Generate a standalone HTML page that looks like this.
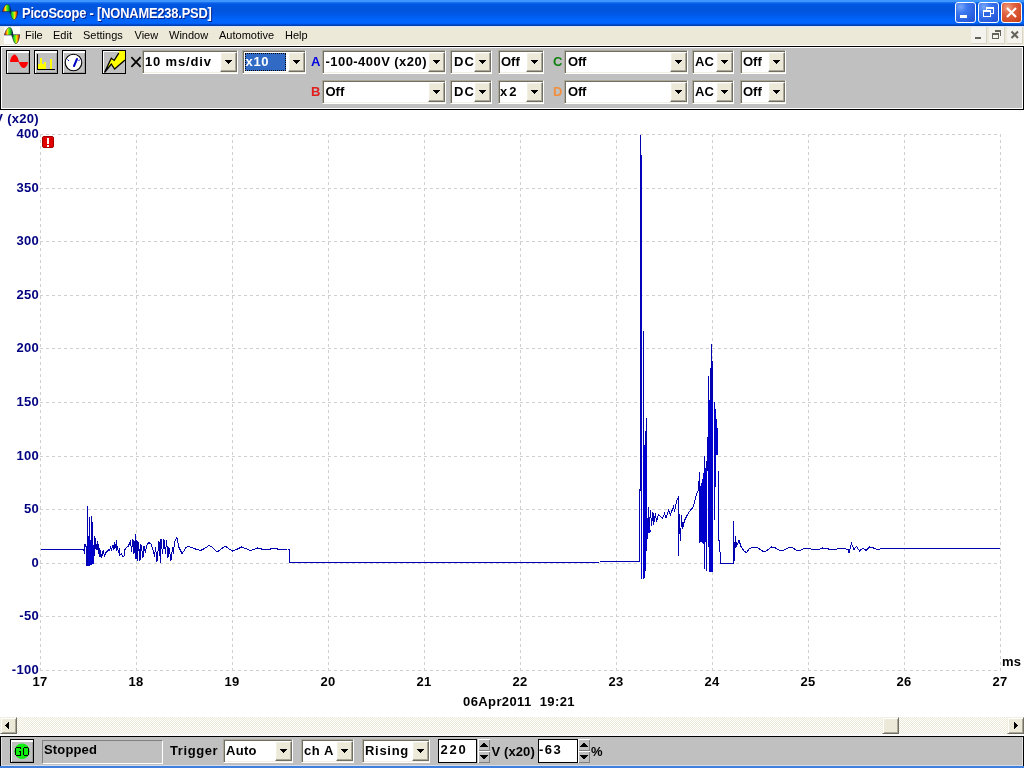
<!DOCTYPE html><html><head><meta charset="utf-8"><title>PicoScope</title><style>
*{margin:0;padding:0;box-sizing:border-box}
html,body{will-change:transform;width:1024px;height:768px;overflow:hidden;background:#fff;font-family:"Liberation Sans",sans-serif}
.a{position:absolute}
.t{position:absolute;white-space:nowrap;line-height:1}
.b13{font-size:13px;font-weight:bold;letter-spacing:0.3px}
.cb{position:absolute;border:1px solid;border-color:#ACA899 #FFFFFF #FFFFFF #ACA899;background:#fff;box-shadow:inset 1px 1px 0 #716F64,inset -1px -1px 0 #F1EFE2}
.cbb{position:absolute;top:1px;right:0px;bottom:1px;width:17px;background:#ECE9D8;border:1px solid;border-color:#FFFFFF #716F64 #716F64 #FFFFFF;box-shadow:inset -1px -1px 0 #ACA899,inset 1px 1px 0 #F1EFE2}
.arr{position:absolute;left:4px;top:7px;width:7px;height:4px;background:#000;clip-path:polygon(0 0,7px 0,7px 1px,6px 1px,6px 2px,5px 2px,5px 3px,4px 3px,4px 4px,3px 4px,3px 3px,2px 3px,2px 2px,1px 2px,1px 1px,0 1px)}
.tbtn{position:absolute;width:24px;height:24px;border:1px solid #000;background:#C0C0C0;box-shadow:inset 1px 1px 0 #fff,inset 0 2px 0 #fff,inset -1px -1px 0 #A0A0A0}
</style></head><body>
<div class="a" style="left:0;top:0;width:1024px;height:26px;background:linear-gradient(to bottom,#3D95FF 0px,#3D95FF 1.5px,#1A70F0 2.5px,#0058E2 4px,#0054DC 8px,#0055E0 12px,#005CEE 16px,#0064FA 19px,#0066FF 23px,#0058E8 24px,#0040B0 25px,#0040B0 26px)"></div>
<div class="a" style="left:0;top:26px;width:1024px;height:1px;background:#DCE6F8"></div>
<svg class="a" style="left:2px;top:4px" width="16" height="16" viewBox="0 0 16 16" preserveAspectRatio="none">
<defs><linearGradient id="ugt" x1="0" x2="1" y1="0" y2="0"><stop offset="0" stop-color="#900000"/><stop offset="0.18" stop-color="#FF6000"/><stop offset="0.38" stop-color="#FFE000"/><stop offset="0.55" stop-color="#40F020"/><stop offset="0.78" stop-color="#10B010"/><stop offset="1" stop-color="#003070"/></linearGradient>
<linearGradient id="lgt" x1="0" x2="1" y1="0" y2="0"><stop offset="0" stop-color="#003050"/><stop offset="0.22" stop-color="#20D020"/><stop offset="0.42" stop-color="#50F020"/><stop offset="0.62" stop-color="#FFE000"/><stop offset="0.82" stop-color="#E06000"/><stop offset="1" stop-color="#800000"/></linearGradient></defs>
<path d="M0.3 7.6 C1.5 4 3 0.4 5.5 0.4 C7.6 0.4 8.4 3 8.8 7.6 Z" fill="url(#ugt)" stroke="#1A1A3A" stroke-width="0.55"/>
<path d="M7.6 7.2 L15.8 7.2 C15.4 11 14 15.7 12 15.7 C10 15.7 9 11 7.6 7.2 Z" fill="url(#lgt)" stroke="#1A1A3A" stroke-width="0.55"/>
<path d="M8.2 4.5 L9 9.5" stroke="#102050" stroke-width="1"/>
</svg>
<div class="t" style="left:21.5px;top:6px;font-size:14px;font-weight:bold;color:#fff;letter-spacing:-0.2px;transform-origin:0 0;transform:scaleX(0.92);text-shadow:1px 1px 0 #0A1E8A">PicoScope - [NONAME238.PSD]</div>
<div class="a" style="left:955px;top:2px;width:21px;height:21px;border:1px solid #fff;border-radius:3px;background:radial-gradient(circle at 25% 20%,#7AA8F8 0%,#3C78F0 30%,#2A5FE0 70%,#2050D0 100%)"><div class="a" style="left:4px;top:12px;width:7px;height:3px;background:#fff"></div></div>
<div class="a" style="left:978px;top:2px;width:21px;height:21px;border:1px solid #fff;border-radius:3px;background:radial-gradient(circle at 25% 20%,#7AA8F8 0%,#3C78F0 30%,#2A5FE0 70%,#2050D0 100%)"><div class="a" style="left:7px;top:4px;width:8px;height:7px;border:1px solid #fff;border-top-width:2px"></div><div class="a" style="left:4px;top:7px;width:8px;height:7px;border:1px solid #fff;border-top-width:2px;background:#2F66E4"></div></div>
<div class="a" style="left:1001px;top:2px;width:21px;height:21px;border:1px solid #fff;border-radius:3px;background:radial-gradient(circle at 30% 25%,#F0A080 0%,#E06040 35%,#D04820 80%,#C03810 100%)"><svg class="a" style="left:0;top:0" width="19" height="19"><path d="M5 5 L14 14 M14 5 L5 14" stroke="#fff" stroke-width="2.2"/></svg></div>
<div class="a" style="left:0;top:27px;width:1024px;height:18px;background:#ECE9D8"></div>
<div class="a" style="left:0;top:45px;width:1024px;height:1px;background:#FFFFFF"></div>
<div class="a" style="left:4px;top:27px;width:16px;height:17px;background:#FFFFFF"></div><svg class="a" style="left:4px;top:27px" width="16" height="17" viewBox="0 0 16 16" preserveAspectRatio="none">
<defs><linearGradient id="ugm" x1="0" x2="1" y1="0" y2="0"><stop offset="0" stop-color="#900000"/><stop offset="0.18" stop-color="#FF6000"/><stop offset="0.38" stop-color="#FFE000"/><stop offset="0.55" stop-color="#40F020"/><stop offset="0.78" stop-color="#10B010"/><stop offset="1" stop-color="#003070"/></linearGradient>
<linearGradient id="lgm" x1="0" x2="1" y1="0" y2="0"><stop offset="0" stop-color="#003050"/><stop offset="0.22" stop-color="#20D020"/><stop offset="0.42" stop-color="#50F020"/><stop offset="0.62" stop-color="#FFE000"/><stop offset="0.82" stop-color="#E06000"/><stop offset="1" stop-color="#800000"/></linearGradient></defs>
<path d="M0.3 7.6 C1.5 4 3 0.4 5.5 0.4 C7.6 0.4 8.4 3 8.8 7.6 Z" fill="url(#ugm)" stroke="#1A1A3A" stroke-width="0.55"/>
<path d="M7.6 7.2 L15.8 7.2 C15.4 11 14 15.7 12 15.7 C10 15.7 9 11 7.6 7.2 Z" fill="url(#lgm)" stroke="#1A1A3A" stroke-width="0.55"/>
<path d="M8.2 4.5 L9 9.5" stroke="#102050" stroke-width="1"/>
</svg>
<div class="t" style="left:25px;top:30px;font-size:11px;color:#000">File</div>
<div class="t" style="left:53px;top:30px;font-size:11px;color:#000">Edit</div>
<div class="t" style="left:83px;top:30px;font-size:11px;color:#000">Settings</div>
<div class="t" style="left:134.5px;top:30px;font-size:11px;color:#000">View</div>
<div class="t" style="left:169px;top:30px;font-size:11px;color:#000">Window</div>
<div class="t" style="left:219px;top:30px;font-size:11px;color:#000">Automotive</div>
<div class="t" style="left:285px;top:30px;font-size:11px;color:#000">Help</div>
<div class="a" style="left:971px;top:27px;width:16px;height:17px;background:#F4F3EE;border-right:1px solid #D8D5C8;border-bottom:1px solid #D8D5C8"><div class="a" style="left:4px;top:10px;width:6px;height:2px;background:#65625A"></div></div>
<div class="a" style="left:989px;top:27px;width:16px;height:17px;background:#F4F3EE;border-right:1px solid #D8D5C8;border-bottom:1px solid #D8D5C8"><div class="a" style="left:6px;top:3px;width:6px;height:6px;border:1px solid #65625A;border-top-width:2px;border-left:none;border-bottom:none"></div><div class="a" style="left:3px;top:6px;width:7px;height:6px;border:1px solid #65625A;border-top-width:2px;background:#F4F3EE"></div></div>
<div class="a" style="left:1007px;top:27px;width:16px;height:17px;background:#F4F3EE;border-right:1px solid #D8D5C8;border-bottom:1px solid #D8D5C8"><svg class="a" style="left:0;top:0" width="16" height="16"><path d="M4.5 4.5 L11 11 M11 4.5 L4.5 11" stroke="#65625A" stroke-width="2"/></svg></div>
<div class="a" style="left:0;top:46px;width:1024px;height:64px;background:#C0C0C0;border:1px solid #000;box-shadow:inset 1px 1px 0 #fff,inset -1px -1px 0 #fff"></div>
<div class="tbtn" style="left:6px;top:50px"><svg class="a" style="left:-1px;top:-1px" width="24" height="24"><path d="M4 12 C4.5 6 8 4 9 4.5 C11 5.5 12.5 9 13 12 Z" fill="#FF0000"/><path d="M12.5 12 L22 12 C21.5 16 19 18 17.5 18 C15.5 18 14 15 12.5 12 Z" fill="#FF0000"/></svg></div>
<div class="tbtn" style="left:34px;top:50px"><svg class="a" style="left:-1px;top:-1px" width="24" height="24" shape-rendering="crispEdges"><g fill="#FFFF00"><rect x="6" y="8" width="2" height="11"/><rect x="4" y="14" width="8" height="5"/><rect x="10" y="12" width="2" height="7"/><rect x="16" y="9" width="2" height="10"/></g><rect x="3" y="4" width="1" height="16" fill="#000"/><rect x="3" y="19" width="18" height="1" fill="#000"/></svg></div>
<div class="tbtn" style="left:62px;top:50px"><svg class="a" style="left:-1px;top:-1px" width="24" height="24"><circle cx="11.5" cy="12.5" r="8.3" fill="#fff" stroke="#000" stroke-width="1.1"/><path d="M12 16 L15 9" stroke="#0000C0" stroke-width="2" stroke-linecap="round"/><path d="M5.5 9.5 L7 11" stroke="#0000C0" stroke-width="1"/><path d="M16.5 11 L18 9.5" stroke="#0000C0" stroke-width="1"/></svg></div>
<div class="a" style="left:102px;top:50px;width:24px;height:24px;border:1px solid #000;background:#C0C0C0;box-shadow:inset 1px 1px 0 #fff"><svg class="a" style="left:-1px;top:-1px" width="24" height="24"><path d="M2.5 22.5 L9.3 8.2 L12.2 10.4 L16.6 3.3 L17 1 L23 1 L23 10 L12.6 19.1 L9.3 14 Z" fill="#FFFF00"/><path d="M2.5 22.5 L9.3 8.2 L12.2 10.4 L16.8 3.2 M23 10 L12.6 19.1 L9.3 14 L2.5 22.5" fill="none" stroke="#000" stroke-width="1.3"/></svg></div>
<svg class="a" style="left:130px;top:56px" width="12" height="12"><path d="M2 1.8 L10 10.2 M10 1.8 L2 10.2" stroke="#000" stroke-width="1.7" stroke-linecap="square"/></svg>
<div class="cb" style="left:142px;top:50px;width:96px;height:24px"><div class="t b13" style="left:2px;top:4px;color:#000;letter-spacing:0.85px;">10 ms/div</div><div class="cbb" style="width:17px"><div class="arr"></div></div></div>
<div class="cb" style="left:242px;top:50px;width:64px;height:24px"><div class="a" style="left:2px;top:2px;width:41px;height:18px;background:#316AC5;outline:1px dotted #000;outline-offset:-1px"></div><div class="t b13" style="left:2.5px;top:4px;color:#fff;letter-spacing:0.7px;">x10</div><div class="cbb" style="width:17px"><div class="arr"></div></div></div>
<div class="t b13" style="left:311px;top:55px;color:#0000E0">A</div>
<div class="t b13" style="left:311px;top:85px;color:#E02020">B</div>
<div class="t b13" style="left:553px;top:55px;color:#108010">C</div>
<div class="t b13" style="left:553px;top:85px;color:#F09040">D</div>
<div class="cb" style="left:322px;top:50px;width:124px;height:24px"><div class="t b13" style="left:2.5px;top:4px;color:#000;letter-spacing:0.45px;">-100-400V (x20)</div><div class="cbb" style="width:17px"><div class="arr"></div></div></div>
<div class="cb" style="left:450px;top:50px;width:42px;height:24px"><div class="t b13" style="left:3px;top:4px;color:#000;letter-spacing:1px;">DC</div><div class="cbb" style="width:17px"><div class="arr"></div></div></div>
<div class="cb" style="left:498px;top:50px;width:46px;height:24px"><div class="t b13" style="left:2px;top:4px;color:#000;letter-spacing:0px;">Off</div><div class="cbb" style="width:17px"><div class="arr"></div></div></div>
<div class="cb" style="left:564px;top:50px;width:124px;height:24px"><div class="t b13" style="left:3px;top:4px;color:#000;letter-spacing:-0.2px;">Off</div><div class="cbb" style="width:17px"><div class="arr"></div></div></div>
<div class="cb" style="left:692px;top:50px;width:42px;height:24px"><div class="t b13" style="left:2px;top:4px;color:#000;letter-spacing:0px;">AC</div><div class="cbb" style="width:17px"><div class="arr"></div></div></div>
<div class="cb" style="left:740px;top:50px;width:46px;height:24px"><div class="t b13" style="left:2px;top:4px;color:#000;letter-spacing:0px;">Off</div><div class="cbb" style="width:17px"><div class="arr"></div></div></div>
<div class="cb" style="left:322px;top:80px;width:124px;height:24px"><div class="t b13" style="left:2.5px;top:4px;color:#000;letter-spacing:0px;">Off</div><div class="cbb" style="width:17px"><div class="arr"></div></div></div>
<div class="cb" style="left:450px;top:80px;width:42px;height:24px"><div class="t b13" style="left:3px;top:4px;color:#000;letter-spacing:1px;">DC</div><div class="cbb" style="width:17px"><div class="arr"></div></div></div>
<div class="cb" style="left:498px;top:80px;width:46px;height:24px"><div class="t b13" style="left:1px;top:4px;color:#000;letter-spacing:2px;">x2</div><div class="cbb" style="width:17px"><div class="arr"></div></div></div>
<div class="cb" style="left:564px;top:80px;width:124px;height:24px"><div class="t b13" style="left:3px;top:4px;color:#000;letter-spacing:-0.2px;">Off</div><div class="cbb" style="width:17px"><div class="arr"></div></div></div>
<div class="cb" style="left:692px;top:80px;width:42px;height:24px"><div class="t b13" style="left:2px;top:4px;color:#000;letter-spacing:0px;">AC</div><div class="cbb" style="width:17px"><div class="arr"></div></div></div>
<div class="cb" style="left:740px;top:80px;width:46px;height:24px"><div class="t b13" style="left:2px;top:4px;color:#000;letter-spacing:0px;">Off</div><div class="cbb" style="width:17px"><div class="arr"></div></div></div>
<svg class="a" style="left:0;top:110px" width="1024" height="607" viewBox="0 110 1024 607"><path d="M40.5 134 V671 M136.5 134 V671 M232.5 134 V671 M328.5 134 V671 M424.5 134 V671 M520.5 134 V671 M616.5 134 V671 M712.5 134 V671 M808.5 134 V671 M904.5 134 V671 M1000.5 134 V671 M40 134.5 H1001 M40 188.5 H1001 M40 241.5 H1001 M40 295.5 H1001 M40 348.5 H1001 M40 402.5 H1001 M40 456.5 H1001 M40 509.5 H1001 M40 563.5 H1001 M40 616.5 H1001 M40 670.5 H1001" stroke="#D0D0D0" stroke-width="1" stroke-dasharray="3 3" shape-rendering="crispEdges" fill="none"/><polyline points="40.5,549 83.5,549 84.5,553.5 85,544.5 86,546.5 86,565.5 87.5,565.5 87.5,505.5 87.5,565.5 89.5,565.5 89.5,516.5 89.5,540.5 91.5,540.5 91.5,515.5 91.5,540.5 92.5,540.5 92.5,521.5 92.5,545.5 93.5,545.5 93.5,563.5 94.5,548.5 94.5,536.5 95.5,548.5 95.5,538.5 96.5,549.5 97.5,541.5 97.5,549.5 98.5,544.5 98.5,553.5 99.5,548.5 99.5,556.5 100.5,550.5 100.5,556.5 101.5,557.5 102.5,551.5 102.5,555.5 103.5,550.5 104.5,556.5 105.5,552.5 107.5,551.5 108.5,549.5 109.5,550.5 110.5,547.5 111.5,549.5 112.5,546.5 113.5,548.5 114.5,542.5 114.5,548.5 115.5,547.5 116.5,540.5 116.5,550.5 117.5,547.5 118.5,552.5 119.5,548.5 119.5,555.5 121.5,553.5 122.5,556.5 124,556 125,549.5 126.5,547.5 128.5,546 130.5,540.5 131.5,551.5 133,539.5 134,553.5 135.5,534.5 136,559 137,540.5 137.5,560.5 138.5,542.5 140,560.5 141,544.5 143,557.5 144,546.5 145.5,552.5 146.5,545.5 149,542.5 151,544 153.5,551.5 154.5,556.5 155.5,547.5 157,561.5 159,541.5 160.5,562.5 161,539 162.5,553.5 164,539.5 165.5,553.5 166.5,540.5 168,557.5 169,547.5 171,560.5 172.5,547.5 173.5,553.5 174.5,541.5 177,537.5 178.5,545.5 179,547.5 182,553.5 183.5,551.5 186,547.5 188.5,546.5 195.5,549 200.5,550.5 204.5,548.5 209,545.5 212.5,547.5 217,552 220.5,549.5 225,546 228.5,548.5 232.5,551 236.5,549.5 241.5,547 245.5,548.5 250,550.5 253.5,549.5 257.5,548 265.5,550 270.5,549 274.5,548.5 280.5,549.5 287.5,549 289.5,549 289.5,562.5 400.5,562.5 560.5,562.5 600.5,562 639.5,561.5 639.5,488.5" fill="none" stroke="#0000B0" stroke-width="1" shape-rendering="crispEdges"/><polyline points="640.5,134.5 640.5,490.5" fill="none" stroke="#0000B0" stroke-width="1" shape-rendering="crispEdges"/><polyline points="643.5,330.5 643.5,578.5" fill="none" stroke="#0000B0" stroke-width="1" shape-rendering="crispEdges"/><polyline points="644.5,445.5 644.5,577.5" fill="none" stroke="#0000B0" stroke-width="1" shape-rendering="crispEdges"/><polyline points="645.5,430.5 645.5,570.5" fill="none" stroke="#0000B0" stroke-width="1" shape-rendering="crispEdges"/><polyline points="646.5,417.5 646.5,550.5" fill="none" stroke="#0000B0" stroke-width="1" shape-rendering="crispEdges"/><polyline points="646.5,550.5 648.5,507.5 649,531.5 650.5,510.5 651.5,525.5 653,512.5 653.5,525 655.5,513.5 656.5,521.5 658.5,514.5 662.5,518.5 664.5,513.5 666,517.5 668.5,510.5 670.5,514.5 673.5,506.5 674.5,511.5 676.5,501.5 678.5,496.5 678.5,555.5 679.5,514.5 680.5,540.5 681.5,515.5 682.5,528.5 684.5,520.5 686.5,516.5 689.5,511.5 693.5,506.5 696.5,493.5 698.5,490.5 699.5,472.5 699.5,542.5 700.5,540.5" fill="none" stroke="#0000B0" stroke-width="1" shape-rendering="crispEdges"/><polyline points="702.5,484.5 702.5,540.5" fill="none" stroke="#0000B0" stroke-width="1" shape-rendering="crispEdges"/><polyline points="704.5,455.5 704.5,568.5" fill="none" stroke="#0000B0" stroke-width="1" shape-rendering="crispEdges"/><polyline points="706.5,460.5 706.5,570.5" fill="none" stroke="#0000B0" stroke-width="1" shape-rendering="crispEdges"/><polyline points="707.5,436.5 707.5,470.5" fill="none" stroke="#0000B0" stroke-width="1" shape-rendering="crispEdges"/><polyline points="708.5,375.5 708.5,520.5" fill="none" stroke="#0000B0" stroke-width="1" shape-rendering="crispEdges"/><polyline points="710.5,367.5 710.5,520.5" fill="none" stroke="#0000B0" stroke-width="1" shape-rendering="crispEdges"/><polyline points="711.5,343.5 711.5,400.5" fill="none" stroke="#0000B0" stroke-width="1" shape-rendering="crispEdges"/><polyline points="712.5,360.5 712.5,400.5" fill="none" stroke="#0000B0" stroke-width="1" shape-rendering="crispEdges"/><polyline points="718.5,470.5 718.5,540.5 719.5,540.5 720.5,563.5 733.5,563.5 733.5,521.5 734.5,560.5 735.5,536.5 736.5,546.5 739,540.5 741,546.5 744.5,551.5 746.5,552.5 749.5,548.5 753,547 757.5,547.5 762.5,551 766,551 771.5,547 774.5,547.5 780,550.5 784.5,550 789,547.5 793,548 796,550 801,550 804.5,548 808.5,548 812.5,549.5 817.5,550 822.5,548 826.5,548.5 830.5,549.5 843.5,548.5 848.5,549.5 849,553 851.5,543.5 854,549.5 856.5,546.5 859.5,551 863,548 866,550.5 869.5,547 873.5,548 877.5,549.5 882.5,548.5 886.5,548.5 999.5,548.5" fill="none" stroke="#0000B0" stroke-width="1" shape-rendering="crispEdges"/><polygon points="88,535 90,540 92,542 93.5,545 93.5,564 88,566" fill="#0000CC" shape-rendering="crispEdges"/><polygon points="641,155 642,155 642,579 641,579" fill="#0000CC" shape-rendering="crispEdges"/><polygon points="643,445 647,445 647,515 648,520 651,532 647,534 646,560 645,577 643,577" fill="#0000CC" shape-rendering="crispEdges"/><polygon points="700,488 702,482 704,470 707,466 707,540 704,545 700,540" fill="#0000CC" shape-rendering="crispEdges"/><polygon points="708,400 713,400 713,572 709,572 708,520" fill="#0000CC" shape-rendering="crispEdges"/><polygon points="714,399 716,412 717,426 718,430 718,455 716,455 715,520 714,520" fill="#0000CC" shape-rendering="crispEdges"/></svg>
<div class="t b13" style="right:985px;top:127px;color:#000080;text-align:right">400</div>
<div class="t b13" style="right:985px;top:181px;color:#000080;text-align:right">350</div>
<div class="t b13" style="right:985px;top:234px;color:#000080;text-align:right">300</div>
<div class="t b13" style="right:985px;top:288px;color:#000080;text-align:right">250</div>
<div class="t b13" style="right:985px;top:341px;color:#000080;text-align:right">200</div>
<div class="t b13" style="right:985px;top:395px;color:#000080;text-align:right">150</div>
<div class="t b13" style="right:985px;top:449px;color:#000080;text-align:right">100</div>
<div class="t b13" style="right:985px;top:502px;color:#000080;text-align:right">50</div>
<div class="t b13" style="right:985px;top:556px;color:#000080;text-align:right">0</div>
<div class="t b13" style="right:985px;top:609px;color:#000080;text-align:right">-50</div>
<div class="t b13" style="right:985px;top:663px;color:#000080;text-align:right">-100</div>
<div class="t b13" style="right:985px;top:112px;color:#000080">V (x20)</div>
<div class="t b13" style="left:10px;width:60px;text-align:center;top:675px;color:#000">17</div>
<div class="t b13" style="left:106px;width:60px;text-align:center;top:675px;color:#000">18</div>
<div class="t b13" style="left:202px;width:60px;text-align:center;top:675px;color:#000">19</div>
<div class="t b13" style="left:298px;width:60px;text-align:center;top:675px;color:#000">20</div>
<div class="t b13" style="left:394px;width:60px;text-align:center;top:675px;color:#000">21</div>
<div class="t b13" style="left:490px;width:60px;text-align:center;top:675px;color:#000">22</div>
<div class="t b13" style="left:586px;width:60px;text-align:center;top:675px;color:#000">23</div>
<div class="t b13" style="left:682px;width:60px;text-align:center;top:675px;color:#000">24</div>
<div class="t b13" style="left:778px;width:60px;text-align:center;top:675px;color:#000">25</div>
<div class="t b13" style="left:874px;width:60px;text-align:center;top:675px;color:#000">26</div>
<div class="t b13" style="left:970px;width:60px;text-align:center;top:675px;color:#000">27</div>
<div class="t b13" style="left:1002px;top:655px;color:#000">ms</div>
<div class="t b13" style="left:463px;top:695px;color:#000;white-space:pre;letter-spacing:0.4px">06Apr2011  19:21</div>
<div class="a" style="left:42px;top:136px;width:12px;height:12px;background:#E00000;border:1px solid #A00000;border-radius:2px"><div class="a" style="left:4px;top:1px;width:2px;height:6px;background:#fff"></div><div class="a" style="left:4px;top:8px;width:2px;height:2px;background:#fff"></div></div>
<div class="a" style="left:0;top:717px;width:1024px;height:17px;background-color:#F6F5EF;background-image:repeating-conic-gradient(#FFFFFF 0 25%,#ECE9D8 0 50%);background-size:2px 2px"></div>
<div class="a" style="left:0px;top:717px;width:17px;height:17px;background:#ECE9D8;border:1px solid;border-color:#F1EFE2 #716F64 #716F64 #F1EFE2;box-shadow:inset 1px 1px 0 #fff,inset -1px -1px 0 #ACA899"></div>
<div class="a" style="left:1007px;top:717px;width:17px;height:17px;background:#ECE9D8;border:1px solid;border-color:#F1EFE2 #716F64 #716F64 #F1EFE2;box-shadow:inset 1px 1px 0 #fff,inset -1px -1px 0 #ACA899"></div>
<div class="a" style="left:882px;top:717px;width:17px;height:17px;background:#ECE9D8;border:1px solid;border-color:#F1EFE2 #716F64 #716F64 #F1EFE2;box-shadow:inset 1px 1px 0 #fff,inset -1px -1px 0 #ACA899"></div>
<svg class="a" style="left:5px;top:722px" width="4" height="7" shape-rendering="crispEdges"><path d="M3 0h1v7h-1v-1h-1v-1h-1v-1h-1v-1h1v-1h1v-1h1z" fill="#000"/></svg>
<svg class="a" style="left:1014px;top:722px" width="4" height="7" shape-rendering="crispEdges"><path d="M0 0h1v1h1v1h1v1h1v1h-1v1h-1v1h-1v1h-1z" fill="#000"/></svg>
<div class="a" style="left:0;top:734px;width:1024px;height:2px;background:#FAFAFA"></div>
<div class="a" style="left:0;top:736px;width:1024px;height:30px;background:#C0C0C0;border-top:1px solid #000;border-left:1px solid #000;border-right:1px solid #000;box-shadow:inset 1px 0 0 #E0E0E0,inset -1px 0 0 #E0E0E0,inset 0 -1px 0 #D8DCE4"></div>
<div class="a" style="left:0;top:766px;width:1024px;height:2px;background:#3F7FDD"></div>
<div class="tbtn" style="left:10px;top:739px"><svg class="a" style="left:-1px;top:-1px" width="24" height="24"><circle cx="12" cy="12.2" r="7.7" fill="#10EE10"/><g fill="none" stroke="#000" stroke-width="1.1" shape-rendering="crispEdges"><path d="M10.5 9.5 V8.5 H6.5 L5.5 9.5 V15.5 L6.5 16.5 H10.5 V12.5 H8.5"/><path d="M14.5 8.5 H17.5 L18.5 9.5 V15.5 L17.5 16.5 H14.5 L13.5 15.5 V9.5 Z"/></g></svg></div>
<div class="a" style="left:42px;top:740px;width:121px;height:24px;border:1px solid;border-color:#808080 #fff #fff #808080;background:#C0C0C0"><div class="t b13" style="left:1px;top:2px;letter-spacing:0.15px">Stopped</div></div>
<div class="t b13" style="left:170px;top:744px;letter-spacing:0.6px">Trigger</div>
<div class="cb" style="left:223px;top:739px;width:70px;height:24px"><div class="t b13" style="left:2px;top:4px;color:#000;letter-spacing:0.3px;">Auto</div><div class="cbb" style="width:17px"><div class="arr"></div></div></div>
<div class="cb" style="left:301px;top:739px;width:53px;height:24px"><div class="t b13" style="left:2px;top:4px;color:#000;letter-spacing:0.6px;">ch A</div><div class="cbb" style="width:17px"><div class="arr"></div></div></div>
<div class="cb" style="left:362px;top:739px;width:68px;height:24px"><div class="t b13" style="left:2px;top:4px;color:#000;letter-spacing:0.7px;">Rising</div><div class="cbb" style="width:17px"><div class="arr"></div></div></div>
<div class="a" style="left:438px;top:739px;width:39px;height:24px;border:1px solid #000;background:#fff"><div class="t b13" style="left:1.5px;top:3px;letter-spacing:1.8px">220</div></div>
<div class="a" style="left:478px;top:739px;width:12px;height:12px;background:#C0C0C0;box-shadow:inset 1px 1px 0 #fff,inset -1px -1px 0 #808080"><svg class="a" style="left:0;top:0" width="12" height="12" shape-rendering="crispEdges"><path d="M6 3.5 L10 8 L2 8 Z" fill="#000"/></svg></div><div class="a" style="left:478px;top:751px;width:12px;height:12px;background:#C0C0C0;box-shadow:inset 1px 1px 0 #fff,inset -1px -1px 0 #808080"><svg class="a" style="left:0;top:0" width="12" height="12" shape-rendering="crispEdges"><path d="M2 4 L10 4 L6 8.5 Z" fill="#000"/></svg></div>
<div class="t b13" style="left:491.5px;top:745px;letter-spacing:0.1px">V (x20)</div>
<div class="a" style="left:538px;top:739px;width:40px;height:24px;border:1px solid #000;background:#fff"><div class="t b13" style="left:0px;top:3px;letter-spacing:1.5px">-63</div></div>
<div class="a" style="left:578px;top:739px;width:12px;height:12px;background:#C0C0C0;box-shadow:inset 1px 1px 0 #fff,inset -1px -1px 0 #808080"><svg class="a" style="left:0;top:0" width="12" height="12" shape-rendering="crispEdges"><path d="M6 3.5 L10 8 L2 8 Z" fill="#000"/></svg></div><div class="a" style="left:578px;top:751px;width:12px;height:12px;background:#C0C0C0;box-shadow:inset 1px 1px 0 #fff,inset -1px -1px 0 #808080"><svg class="a" style="left:0;top:0" width="12" height="12" shape-rendering="crispEdges"><path d="M2 4 L10 4 L6 8.5 Z" fill="#000"/></svg></div>
<div class="t b13" style="left:591px;top:745px">%</div>
</body></html>
